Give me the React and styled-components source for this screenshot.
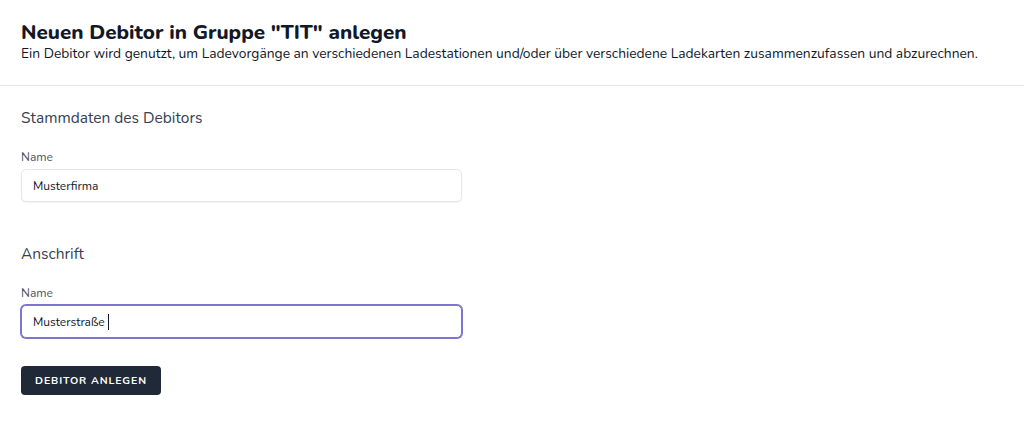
import React from "react";
import styled, { createGlobalStyle } from "styled-components";

const Global = createGlobalStyle`
  * { box-sizing: border-box; }
  html, body { margin: 0; padding: 0; background: #ffffff; }
  body { font-family: "Nunito", Lato, "Open Sans", sans-serif; color: #111827; }
`;

const Page = styled.div`
  width: 1024px;
  height: 446px;
  background: #fff;
  overflow: hidden;
`;

const Header = styled.header`
  padding: 19px 21px 22px;
  border-bottom: 1px solid #e5e7eb;
`;

const Title = styled.h1`
  margin: 0;
  font-size: 20.6px;
  line-height: 26px;
  font-weight: 800;
  color: #111827;
`;

const Subtitle = styled.p`
  margin: 0;
  font-size: 13.8px;
  line-height: 18px;
  color: #111827;
`;

const Form = styled.form`
  padding: 22px 21px 0;
  display: flex;
  flex-direction: column;
`;

const Section = styled.section`
  display: flex;
  flex-direction: column;
  margin-bottom: ${(p) => p.$gap || 0}px;
`;

const SectionTitle = styled.h2`
  margin: 0 0 22px;
  font-size: 15.5px;
  line-height: 20px;
  font-weight: 400;
  color: #374151;
`;

const Label = styled.label`
  font-size: 12px;
  line-height: 15px;
  color: #4b5563;
  margin-bottom: 4px;
`;

const Field = styled.div`
  position: relative;
  width: 441px;
`;

const Input = styled.input`
  display: block;
  width: 441px;
  height: 33px;
  padding: 0 11px;
  font-family: inherit;
  font-size: 12px;
  color: #111827;
  background: #fff;
  border: 1px solid ${(p) => (p.$focused ? "#7d74d4" : "#e5e7eb")};
  box-shadow: ${(p) =>
    p.$focused ? "0 0 0 1px #7d74d4" : "0 1px 2px rgba(0,0,0,0.06)"};
  border-radius: 5px;
  outline: none;
`;

const Caret = styled.span`
  position: absolute;
  left: 87px;
  top: 9px;
  width: 1px;
  height: 16px;
  background: #111827;
`;

const Button = styled.button`
  align-self: flex-start;
  height: 29px;
  padding: 0 14px;
  background: #1f2937;
  color: #fff;
  border: none;
  border-radius: 4px;
  font-family: inherit;
  font-size: 10.5px;
  font-weight: 700;
  letter-spacing: 0.085em;
  text-transform: uppercase;
`;

export default function App() {
  return (
    <Page>
      <Global />
      <Header>
        <Title>Neuen Debitor in Gruppe "TIT" anlegen</Title>
        <Subtitle>
          Ein Debitor wird genutzt, um Ladevorgänge an verschiedenen Ladestationen und/oder über verschiedene Ladekarten zusammenzufassen und abzurechnen.
        </Subtitle>
      </Header>
      <Form onSubmit={(e) => e.preventDefault()}>
        <Section $gap={42}>
          <SectionTitle>Stammdaten des Debitors</SectionTitle>
          <Label>Name</Label>
          <Field>
            <Input defaultValue="Musterfirma" />
          </Field>
        </Section>
        <Section $gap={28}>
          <SectionTitle>Anschrift</SectionTitle>
          <Label>Name</Label>
          <Field>
            <Input $focused defaultValue="Musterstraße" />
            <Caret />
          </Field>
        </Section>
        <Button type="submit">Debitor anlegen</Button>
      </Form>
    </Page>
  );
}
